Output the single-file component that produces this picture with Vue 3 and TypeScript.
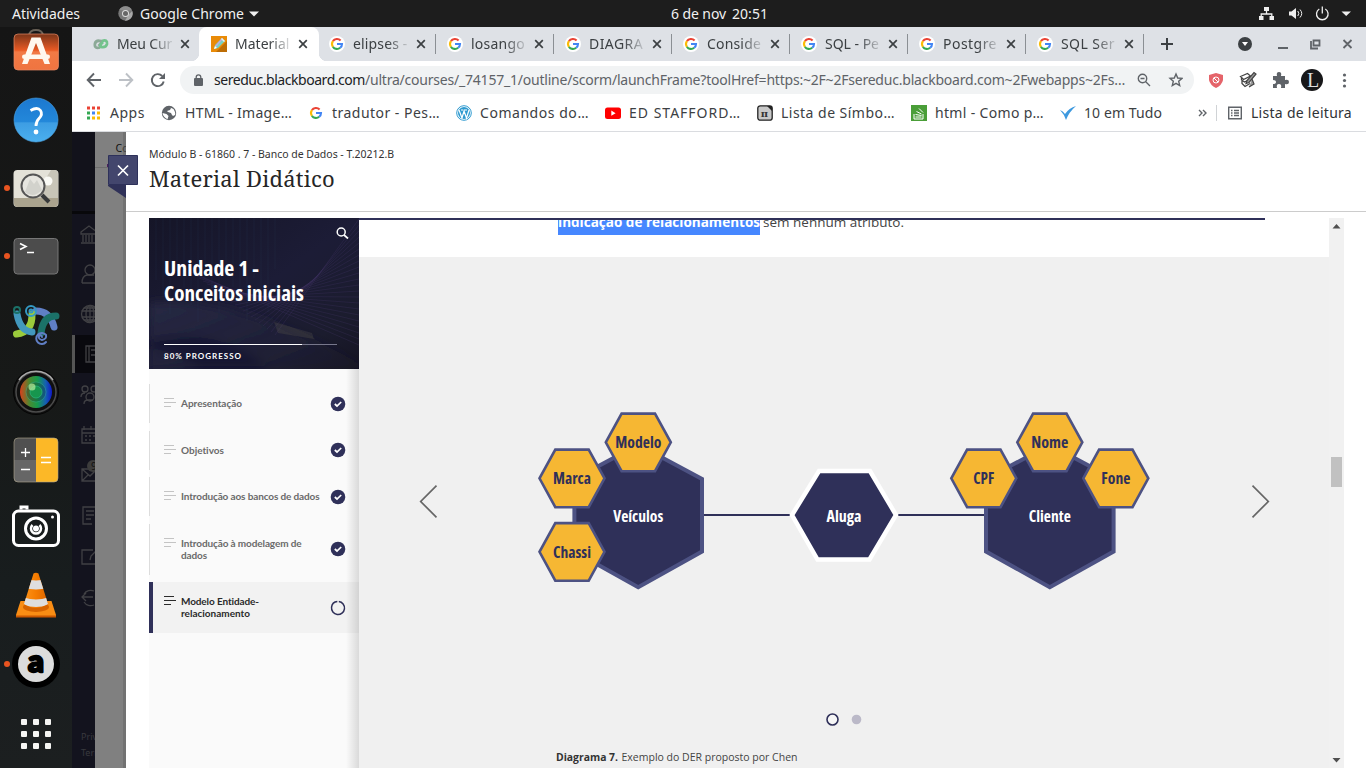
<script setup lang="ts">
interface Tab { title: string; w: number; kind: 'chain' | 'pencil' | 'google'; active?: boolean; sep?: boolean }
interface Mark { label: string; w: number; slot: number; kind: string }
interface Lesson { lines: string[]; widths: number[]; tall?: boolean; active?: boolean }

const tabs: Tab[] = [
  { title: 'Meu Cur', w: 55, kind: 'chain' },
  { title: 'Material', w: 54.5, kind: 'pencil', active: true },
  { title: 'elipses -', w: 54.5, kind: 'google', sep: true },
  { title: 'losango', w: 54, kind: 'google', sep: true },
  { title: 'DIAGRA', w: 54, kind: 'google', sep: true },
  { title: 'Conside', w: 54, kind: 'google', sep: true },
  { title: 'SQL - Pe', w: 54, kind: 'google', sep: true },
  { title: 'Postgre', w: 54, kind: 'google', sep: true },
  { title: 'SQL Ser', w: 54, kind: 'google', sep: true },
]

const marks: Mark[] = [
  { label: 'Apps', w: 35, slot: 75, kind: 'apps' },
  { label: 'HTML - Image…', w: 107, slot: 147, kind: 'globe' },
  { label: 'tradutor - Pes…', w: 108, slot: 148, kind: 'google' },
  { label: 'Comandos do…', w: 109, slot: 149, kind: 'wp' },
  { label: 'ED STAFFORD…', w: 112, slot: 152, kind: 'yt' },
  { label: 'Lista de Símbo…', w: 114, slot: 154, kind: 'pi' },
  { label: 'html - Como p…', w: 109, slot: 149, kind: 'so' },
  { label: '10 em Tudo', w: 78, slot: 140, kind: 'check' },
]

const lessons: Lesson[] = [
  { lines: ['Apresentação'], widths: [61] },
  { lines: ['Objetivos'], widths: [43] },
  { lines: ['Introdução aos bancos de dados'], widths: [138.5] },
  { lines: ['Introdução à modelagem de', 'dados'], widths: [120.5, 26], tall: true },
  { lines: ['Modelo Entidade-', 'relacionamento'], widths: [78, 69], tall: true, active: true },
]

const attributes = [
  { name: 'Marca', x: 572, y: 478.3, w: 38 },
  { name: 'Modelo', x: 638.3, y: 442.3, w: 46 },
  { name: 'Chassi', x: 572, y: 551.8, w: 38 },
  { name: 'CPF', x: 983.8, y: 478.3, w: 21 },
  { name: 'Nome', x: 1049.8, y: 442.3, w: 37 },
  { name: 'Fone', x: 1115.8, y: 478.3, w: 29 },
]
const entities = [
  { name: 'Veículos', x: 638.2, w: 50 },
  { name: 'Cliente', x: 1049.8, w: 42 },
]

// Spreads the label's letters so that it takes the given width.
const vFit = {
  mounted(el: HTMLElement, binding: { value: number }) {
    const count = (el.textContent ?? '').length
    const natural = el.getBoundingClientRect().width
    if (count > 0) el.style.letterSpacing = `${(binding.value - natural) / count}px`
  },
}
</script>

<template>
  <div class="desktop">
    <svg class="defs" width="0" height="0">
      <defs>
        <symbol id="google" viewBox="0 0 16 16">
          <circle cx="8" cy="8" r="8" fill="#fff" />
          <path d="M3.9 5.2A5 5 0 0 1 11.6 4.4" fill="none" stroke="#ea4335" stroke-width="2.1" />
          <path d="M3.9 5.2A5 5 0 0 0 3.9 10.8" fill="none" stroke="#fbbc05" stroke-width="2.1" />
          <path d="M3.9 10.8A5 5 0 0 0 11.2 11.8" fill="none" stroke="#34a853" stroke-width="2.1" />
          <path d="M8 8h5A5 5 0 0 1 11.2 11.8" fill="none" stroke="#4285f4" stroke-width="2.1" />
        </symbol>
        <linearGradient id="bag" x2="0" y2="1"><stop offset="0" stop-color="#7a3519" /><stop offset=".45" stop-color="#e95a24" /><stop offset=".5" stop-color="#f27a45" /><stop offset="1" stop-color="#ef7440" /></linearGradient>
        <linearGradient id="help" x2="0" y2="1"><stop offset="0" stop-color="#1c78d0" /><stop offset=".55" stop-color="#2388da" /><stop offset=".56" stop-color="#3d9de3" /><stop offset="1" stop-color="#4bb0ef" /></linearGradient>
        <linearGradient id="lens" x2="1" y2="0"><stop offset="0" stop-color="#d8401c" /><stop offset=".3" stop-color="#4a8a31" /><stop offset=".55" stop-color="#159a4c" /><stop offset=".8" stop-color="#1560b0" /><stop offset="1" stop-color="#1018c8" /></linearGradient>
        <linearGradient id="cone" x2="1" y2="0"><stop offset="0" stop-color="#ff9a20" /><stop offset=".5" stop-color="#f57c00" /><stop offset="1" stop-color="#d55e00" /></linearGradient>
        <clipPath id="coneClip"><path d="M33.500 12.500Q36 11 38.500 12.500L48 43Q36 51 24 43Z" /></clipPath>
      </defs>
    </svg>

    <header class="topbar">
      <span v-fit="72" class="act">Atividades</span>
      <svg class="chromeicon" width="15" height="15" viewBox="0 0 15 15"><circle cx="7.5" cy="7.5" r="7.2" fill="#777" /><path d="M1.2 4A7.2 7.2 0 0 1 14 4.4H7.5z" fill="#8d8d8d" /><path d="M7 14.7L10.6 8.8 14.2 5A7.2 7.2 0 0 1 7 14.7" fill="#a8a8a8" /><circle cx="7.5" cy="7.5" r="3.5" fill="#ddd" /><circle cx="7.5" cy="7.5" r="2.5" fill="#666" /></svg>
      <span v-fit="104" class="appname">Google Chrome</span>
      <svg class="appcaret" width="10" height="6"><path d="M0 .5h10L5 5.5z" fill="#f0f0f0" /></svg>
      <span class="clock"><span v-fit="55">6 de nov</span><span v-fit="36">20:51</span></span>
      <svg class="tray" width="94" height="17" viewBox="0 0 94 17" fill="none" stroke="#eee" stroke-width="1.3">
        <g fill="#eee" stroke="none"><path d="M5 2h5v4H5zM0 11h4.500v4H0zM10.500 11H15v4h-4.500z" /></g><path d="M7.500 6v3M2.200 11V9h10.600v2" />
        <path d="M30 6.500h2.500L37 3v11l-4.500-3.500H30z" fill="#eee" stroke="none" /><path d="M38.800 6q2 2.500 0 5M41 4.500q3.500 4 0 8" stroke-width="1" />
        <path d="M60.300 4a5.800 5.800 0 1 0 6 0M63.300 1.500v7" /><path d="M82.500 6.500h9.500L87.200 11z" fill="#eee" stroke="none" />
      </svg>
    </header>

    <div class="below">
      <aside class="dock">
        <svg viewBox="0 0 72 68"><path d="M29 21v-3q1-5 7-5t7 5v3" fill="none" stroke="#6a6157" stroke-width="2" /><rect x="14" y="17" width="44.500" height="36" rx="4" fill="url(#bag)" stroke="#e98a64" stroke-width=".7" /><path d="M31.500 20.500h9L50 47h-5.500L36 26l-8.500 21H22z" fill="#fff8ee" /><rect x="22" y="37.500" width="28" height="4.500" rx="2.200" fill="#fff8ee" /></svg>
        <svg viewBox="0 0 72 68"><circle cx="36" cy="35" r="22" fill="url(#help)" stroke="#4ba5e5" stroke-width=".6" /><path d="M30.500 25.500q7-4 10 0 2.500 4-1.500 8-3 3-3 7.500" fill="none" stroke="#fff" stroke-width="2.800" /><circle cx="36" cy="47" r="2.400" fill="#fff" /></svg>
        <svg viewBox="0 0 72 68"><circle cx="7" cy="35" r="3" fill="#e95420" /><rect x="13.500" y="17" width="45" height="37" rx="4" fill="#e4e2d8" /><path d="M14 45h44v5q0 4-4 4H18q-4 0-4-4z" fill="#aaa38e" /><path d="M34 45l17-28h3q4 0 4 4v24z" fill="#c8c5b8" /><circle cx="48" cy="28" r="4.500" fill="#fafaf5" /><circle cx="33" cy="33" r="11.500" fill="#e6e5df" stroke="#555" stroke-width="2" /><path d="M25 39l5-13 4 5 3-4 5 10q-9 9-17 2" fill="#d2d2cc" /><path d="M42 42l7 7" stroke="#37393a" stroke-width="4" /></svg>
        <svg viewBox="0 0 72 68"><circle cx="7" cy="35" r="3" fill="#e95420" /><rect x="14" y="17.500" width="44" height="35.500" rx="3.500" fill="#4c4c4c" stroke="#777" /><path d="M20 22.500l6 3-6 3M27 31.500h7" fill="none" stroke="#fff" stroke-width="1.600" /></svg>
        <svg viewBox="0 0 72 68" fill="none" stroke-width="7" stroke-linecap="round"><path d="M36 22q14 0 18 16" stroke="#607fc5" /><path d="M16.500 45q16-2 15.500-20" stroke="#9bcb3c" /><path d="M17 25q3 17 15 18" stroke="#4298bd" /><path d="M41 44q2-17 15-17" stroke="#1b7168" /><g stroke-width="2"><circle cx="17" cy="21" r="3" stroke="#1b7168" /><circle cx="31" cy="22" r="5" stroke="#3499c3" /><circle cx="31" cy="22" r="1.500" stroke="#3499c3" /><path d="M47 53a5.500 5.500 0 1 1 0-7q1 4-4 5-4-1-3-4 2-2 3 1" transform="translate(-1 0)" stroke="#607fc5" /></g></svg>
        <svg viewBox="0 0 72 68"><circle cx="36" cy="35" r="22.500" fill="#101010" stroke="#050505" /><circle cx="36" cy="35" r="20" fill="none" stroke="#4b4b4b" stroke-width="1.500" /><path d="M19 23a21 21 0 0 1 34 0" fill="none" stroke="#aaa" stroke-width="1.500" /><circle cx="36" cy="35" r="16" fill="url(#lens)" /><circle cx="36" cy="35" r="10" fill="#123" fill-opacity=".28" stroke="#3ab6a1" stroke-opacity=".4" /><circle cx="36" cy="35" r="6" fill="#17964e" stroke="#2dc08a" stroke-opacity=".6" /><circle cx="32" cy="30" r="3.500" fill="#b9ef9c" fill-opacity=".7" /></svg>
        <svg viewBox="0 0 72 68"><rect x="14" y="13" width="44" height="44" rx="4" fill="#505050" /><path d="M14 35h22v22H18q-4 0-4-4z" fill="#666" /><path d="M36 13h18q4 0 4 4v36q0 4-4 4H36z" fill="#fcb827" /><rect x="14" y="13" width="44" height="44" rx="4" fill="none" stroke="#b0a890" stroke-opacity=".6" /><path d="M21 27.500h9M25.500 23v9M21 44.500h9M41 32.500h10M41 37.500h10" stroke="#fff" stroke-width="1.300" /></svg>
        <svg viewBox="0 0 72 68" fill="none" stroke="#fff" stroke-width="3"><rect x="13.500" y="18" width="45" height="34.500" rx="5" /><path d="M21 16.500v-2.500h6v2.500" /><circle cx="36" cy="35.500" r="10.500" stroke-width="3" /><path d="M32.500 32a5 5 0 1 0 7 0" stroke-width="2.500" /><circle cx="36" cy="35.500" r="3" fill="#fff" stroke="none" /><circle cx="52.500" cy="24" r="1.500" fill="#fff" stroke="none" /></svg>
        <svg viewBox="0 0 72 68"><path d="M20.500 40h31l4.500 14v2H16v-2z" fill="#f98d14" /><path d="M16 54.500h40v2H16z" fill="#ca5700" /><ellipse cx="36" cy="46" rx="13" ry="5" fill="#d76400" /><g clip-path="url(#coneClip)"><path d="M20 9h32v45H20z" fill="url(#cone)" /><path d="M20 17q16 5 32 0v9q-16 5-32 0zM20 35q16 7 32 0v7q-16 8-32 0z" fill="#dedede" /></g></svg>
        <svg viewBox="0 0 72 68"><circle cx="7" cy="35" r="3" fill="#e95420" /><circle cx="36" cy="35" r="24" fill="#000" /><circle cx="36" cy="35" r="18" fill="#dcdcdc" /><text x="36" y="43" text-anchor="middle" class="glyph-a">a</text></svg>
        <svg viewBox="0 0 72 68"><g fill="#f4f4f2"><template v-for="r in 3" :key="r"><rect v-for="c in 3" :key="c" :x="9 + c * 12" :y="10 + r * 12" width="6" height="6" rx="1" /></template></g></svg>
      </aside>

      <main class="browser">
        <div class="tabstrip">
          <div v-for="t in tabs" :key="t.title" class="tab" :class="{ active: t.active, sep: t.sep }">
            <svg v-if="t.kind === 'google'" class="fav" width="16" height="16"><use href="#google" /></svg>
            <svg v-else-if="t.kind === 'chain'" class="fav" width="16" height="16" viewBox="0 0 16 16" fill="none" stroke-width="2.800"><path d="M7 11.500Q1 13 2 7.500 3 4 7.500 5q2 0 0 3L5.500 10" stroke="#8ca997" /><path d="M9 5Q14.500 3 14 8q-1 4-6 3-1-1 0-3l2-2" stroke="#73c38c" /></svg>
            <svg v-else class="fav" width="16" height="16" viewBox="0 0 16 16"><path d="M0 0h16v16H0z" fill="#e98b08" /><path d="M5 16L16 5v11z" fill="#bd6d05" /><path d="M3 13l1-4 7-7 3 3-7 7z" fill="#77d2c2" /><path d="M4 10l7-8 1 1-7 8z" fill="#c5a9df" /><path d="M11 2l3 3-1 1-3-3z" fill="#eee" /><path d="M3 13l1-3 2 2z" fill="#fff" /></svg>
            <span class="tabtitle"><span v-fit="t.w">{{ t.title }}</span></span>
            <svg class="x" width="10" height="10"><path d="M1.200 1.200l7.600 7.600M8.800 1.200L1.200 8.800" stroke="#3c4043" stroke-width="1.700" /></svg>
          </div>
          <svg class="plus" width="12" height="12"><path d="M6 0v12M0 6h12" stroke="#3c4043" stroke-width="2" /></svg>
          <svg class="winctl" width="116" height="16" viewBox="0 0 116 16"><circle cx="7" cy="8" r="7" fill="#3c4043" /><path d="M4 6h6l-3 4z" fill="#fff" /><g fill="none" stroke="#5f6368" stroke-width="1.800"><path d="M40 12h10M75.500 4.500h6v5h-6zM73 5v7.500h7M105.500 4l8 8M113.500 4l-8 8" /></g></svg>
        </div>

        <div class="toolbar">
          <svg class="navs" width="80" height="16" viewBox="0 0 80 16" fill="none" stroke-width="1.900"><path d="M15 8H2M8 1.500L1.700 8 8 14.500" stroke="#5f6368" /><path d="M33 8h13M40 1.500L46.300 8 40 14.500" stroke="#bdc1c6" /><path d="M77.700 9.500a6 6 0 1 1-1.500-5.500" stroke="#5f6368" /><path d="M79 1v6h-6z" fill="#5f6368" /></svg>
          <div class="omni">
            <svg class="lock" width="9" height="12" viewBox="0 0 9 12"><rect y="4" width="9" height="8" rx="1" fill="#5f6368" /><path d="M2.200 5V3.200a2.300 2.300 0 0 1 4.600 0V5" fill="none" stroke="#5f6368" stroke-width="1.300" /></svg>
            <span v-fit="151" class="host">sereduc.blackboard.com</span><span v-fit="760" class="path">/ultra/courses/_74157_1/outline/scorm/launchFrame?toolHref=https:~2F~2Fsereduc.blackboard.com~2Fwebapps~2Fs…</span>
            <svg class="omniicons" width="46" height="16" viewBox="0 0 46 16" fill="none" stroke="#5f6368" stroke-width="1.400"><circle cx="5.500" cy="6.500" r="4.200" /><path d="M3.500 6.500h4M8.500 9.500l4.500 4.500" /><path d="M39 2l1.700 4 4.300.4-3.300 2.900 1 4.200L39 11.300l-3.700 2.200 1-4.200L33 6.400l4.300-.4z" /></svg>
          </div>
          <svg class="exts" width="146" height="24" viewBox="0 0 146 24">
            <path d="M8 5l7 2v5q-1 5-7 8-6-3-7-8V7z" fill="#e5646a" /><circle cx="8" cy="12" r="3" fill="none" stroke="#fff" /><path d="M6 10l4 4" stroke="#fff" />
            <path d="M32.500 8.500l7-3 3 2.500-7 3.500zM33.500 9v3l3 2 6-3M34 13v2.500l3 3 5-3" fill="none" stroke="#444" stroke-width="1.300" /><path d="M38 15.500l1-3 7-8 2 1.500-7 8.500zM44 11l2 5-5 3" fill="#999" stroke="#444" stroke-width="1.200" />
            <path d="M65 8h4q-1-4 2-4t2 4h4v4q4-1 4 2t-4 2v4h-4q1-4-2-4t-2 4h-4v-4q3 0 3-2t-3-2z" fill="#5f6368" />
            <circle cx="104" cy="12" r="11" fill="#171719" /><text x="105" y="18.500" class="avatar" text-anchor="middle">L</text>
            <g fill="#5f6368"><circle cx="136.500" cy="7" r="1.600" /><circle cx="136.500" cy="12.500" r="1.600" /><circle cx="136.500" cy="18" r="1.600" /></g>
          </svg>
        </div>

        <div class="bookmarks">
          <div v-for="m in marks" :key="m.label" class="mark" :style="{ width: m.slot + 'px' }">
            <svg class="markicon" width="16" height="16" viewBox="0 0 16 16">
              <g v-if="m.kind === 'apps'"><path d="M1 1.500h3v3H1zM6 1.500h3v3H6zM11 1.500h3v3h-3z" fill="#ea4335" /><path d="M1 6.500h3v3H1zM1 11.500h3v3H1z" fill="#34a853" /><path d="M6 6.500h3v3H6z" fill="#4285f4" /><path d="M11 6.500h3v3h-3zM6 11.500h3v3H6zM11 11.500h3v3h-3z" fill="#fbbc05" /></g>
              <g v-else-if="m.kind === 'globe'"><circle cx="8" cy="8" r="7.200" fill="#5f6368" /><path d="M1.500 8l4 1 2 2-1 3.200Q2 12 1.500 8M8 2l2 1-1 2-3 1 1 1 3 1 1 2 1 1 2-1Q15 8 12.500 4z" fill="#fff" /></g>
              <use v-else-if="m.kind === 'google'" href="#google" />
              <g v-else-if="m.kind === 'wp'" fill="none" stroke="#2e9ad0"><circle cx="8" cy="8" r="7.300" /><circle cx="8" cy="8" r="6" fill="#2e9ad0" stroke="none" /><path d="M3 5l3 8 2-7 2.500 7L13 5M5 5h2M8 5h3" stroke="#fff" stroke-width="1.200" /></g>
              <g v-else-if="m.kind === 'yt'"><rect y="2.500" width="16" height="11.500" rx="2.500" fill="#f00" /><path d="M6.300 5.600v5.200L10.600 8.200z" fill="#fff" /></g>
              <g v-else-if="m.kind === 'pi'"><rect x=".8" y=".8" width="14.400" height="14.400" rx="2.500" fill="#c8c8c8" stroke="#222" stroke-width="1.300" /><path d="M10 1h5v5z" fill="#222" /><text x="7.500" y="12" text-anchor="middle" class="pi">π</text></g>
              <g v-else-if="m.kind === 'so'"><path d="M0 0h16v16H0z" fill="#4a9e38" /><path d="M3 9v5h9V9M4.500 12h6M4.500 9.500l6 1M5.500 6.500l5 2.500M8 3.500l4 4" stroke="#fff" fill="none" /></g>
              <path v-else d="M0 5q3 1 5 4Q9 3 16 1 9 7 6 15 4 9 0 5" fill="#3d99df" />
            </svg>
            <span v-fit="m.w">{{ m.label }}</span>
          </div>
          <svg class="more" width="9" height="8"><path d="M1 1l3 3-3 3M5 1l3 3-3 3" fill="none" stroke="#5f6368" stroke-width="1.400" /></svg>
          <i class="msep"></i>
          <svg class="list" width="14" height="14" viewBox="0 0 14 14" fill="none" stroke="#5f6368" stroke-width="1.400"><path d="M.7 1.200h12.600v11.600H.7zM3 4.500h1.500M6 4.500h5M3 7h1.500M6 7h5M3 9.500h1.500M6 9.500h5" /></svg>
          <span v-fit="101" class="reading">Lista de leitura</span>
        </div>

        <section class="page">
          <svg class="under" width="54" height="636" viewBox="72 132 54 636">
            <path d="M72 132h23v79H72z" fill="#12121b" /><path d="M72 211h23v3H72z" fill="#08080b" /><path d="M72 214h23v554H72z" fill="#13131e" /><path d="M95 132h31v636H95z" fill="#808080" />
            <path d="M95 167.500h31" stroke="#6d6d6d" /><path d="M107 164h2v3h-2z" fill="#4b1f5c" /><text x="115.500" y="152" class="co">Co</text>
            <path d="M72 335h23v38H72z" fill="#09090e" /><path d="M72 335h3v38h-3z" fill="#555" />
            <svg x="72" y="132" width="23" height="636" viewBox="72 132 23 636"><g fill="none" stroke="#404044" stroke-width="1.300">
              <path d="M81 232l8-6 8 6v2H81zM83 235v7M86 235v7M89 235v7M92 235v7M81 243h15" /><circle cx="90" cy="270" r="5" /><path d="M82 283q0-7 5-8h7M82 283h13" />
              <circle cx="90" cy="314" r="8.500" /><ellipse cx="90" cy="314" rx="4" ry="8.500" /><path d="M90 305v18M81.500 311h14M82 317h14M84 308h12M84 320h12" />
              <path d="M86 346h12v16H86zM89 346v16M91 350h5M91 355h5" /><circle cx="85" cy="389" r="3" /><circle cx="94" cy="389" r="3" /><circle cx="90" cy="397" r="4" /><path d="M81 397q0-4 4-4M84 404q0-4 4-4h5" />
              <path d="M82 429h15v14H82zM82 433h14M84 426v4M91 426v4M85 436h2M89 436h2M93 436h2M85 440h2M89 440h2" /><path d="M82 469h15v12H82zM82 469l8 7 7-7M82 481l6-6" />
              <path d="M95 507H83v17h9M86 511h8M86 515h8M86 519h5" /><path d="M93 550H82v14h13M90 560l1-4 5-5" /><path d="M94 591a8 8 0 0 0-10 3M94 605a8 8 0 0 1-10-3M82 597h11M86 593l-4 4 4 4" />
            </g><circle cx="93" cy="466" r="6" fill="#3c3c3c" /><text x="91" y="470" class="badge">9</text><text x="81" y="740" class="foot">Privac</text><text x="81" y="756" class="foot">Termos</text></svg>
            <path d="M123 132h3v636h-3z" fill="#666" fill-opacity=".55" />
          </svg>
          <button class="close" aria-label="Fechar"><svg width="30" height="44" viewBox="0 0 30 44"><path d="M0 30h18v13L0 31z" fill="#2f3158" /><path d="M.5.5h29v29H.5z" fill="#43466d" stroke="#2e315a" /><path d="M10 10.500l10 10M20 10.500l-10 10" stroke="#fff" stroke-width="1.700" /></svg></button>

          <div class="panel">
            <div class="heading"><p><span v-fit="245">Módulo B - 61860 . 7 - Banco de Dados - T.20212.B</span></p><h1><span v-fit="186">Material Didático</span></h1></div>
            <div class="frame">
              <nav class="side">
                <div class="hero">
                  <svg class="herobg" width="210" height="151" viewBox="0 0 210 151">
                    <defs><linearGradient id="hg" x2="1" y2="1"><stop offset="0" stop-color="#151527" /><stop offset=".5" stop-color="#1c1c36" /><stop offset=".8" stop-color="#1b1c2e" /><stop offset="1" stop-color="#151322" /></linearGradient><linearGradient id="band" x2="1" y2=".8"><stop offset="0" stop-color="#272944" /><stop offset="1" stop-color="#202038" stop-opacity=".2" /></linearGradient><filter id="soft"><feGaussianBlur stdDeviation="5" /></filter></defs>
                    <path d="M0 0h210v151H0z" fill="url(#hg)" /><g filter="url(#soft)"><path d="M0 85q80-10 210 60v6H0z" fill="url(#band)" /><path d="M0 122q70-15 120 29H50Q35 135 0 130z" fill="#181730" /></g>
                    <g fill="none" stroke="#55417e" stroke-opacity=".2"><path v-for="i in 22" :key="i" :d="`M${130 - i * 4} ${120 - i * 3}L210 ${i * 6 - 5}`" /></g><g stroke="#395477" stroke-opacity=".13"><path v-for="i in 18" :key="i" :d="`M${i * 7} 0v${45 + (i * 17) % 60}`" /></g>
                    <path d="M125 104l38 11 2 6-36-6z" fill="#817860" fill-opacity=".18" />
                  </svg>
                  <svg class="search" width="13" height="12"><circle cx="5.200" cy="5" r="4" fill="none" stroke="#fff" stroke-width="1.500" /><path d="M8 8l4 3.500" stroke="#fff" stroke-width="1.700" /></svg>
                  <svg class="herotitle" width="180" height="60"><text x="0" y="20" textLength="95" lengthAdjust="spacingAndGlyphs">Unidade 1 -</text><text x="0" y="45" textLength="140" lengthAdjust="spacingAndGlyphs">Conceitos iniciais</text></svg>
                  <div class="progress"><i></i></div><div class="ptext"><span v-fit="78">80% PROGRESSO</span></div>
                </div>
                <div class="lessons">
                  <div v-for="l in lessons" :key="l.lines[0]" class="lesson" :class="{ tall: l.tall, current: l.active }">
                    <svg class="lines" width="12" height="10"><path d="M0 .5h10M0 4.500h12M0 8.500h7" stroke="currentColor" stroke-width="1.200" /></svg>
                    <div class="lname"><div v-for="(s, i) in l.lines" :key="s"><span v-fit="l.widths[i]">{{ s }}</span></div></div>
                    <svg class="state" width="16" height="16"><template v-if="!l.active"><circle cx="8" cy="8" r="7.300" fill="#2f3059" /><path d="M4.800 8l2.200 2L11.200 6" fill="none" stroke="#fff" stroke-width="1.700" /></template><circle v-else cx="8" cy="8" r="6.500" fill="none" stroke="#2f3059" stroke-width="1.500" stroke-dasharray="38.300 2.540" transform="rotate(-83 8 8)" /></svg>
                  </div>
                </div>
              </nav>

              <article class="doc">
                <div class="topline"></div>
                <div class="para"><strong><span v-fit="202">indicação de relacionamentos</span></strong><span v-fit="141" class="rest">sem nenhum atributo.</span></div>
                <svg class="diagram" width="970" height="511" viewBox="359 257 970 511">
                  <path d="M700 515h94M895 515h94" stroke="#2f3059" stroke-width="2" />
                  <g v-for="e in entities" :key="e.name" :transform="`translate(${e.x} 516)`"><path d="M0-71.200L63.800-37V35.500L0 71.200-63.800 35.500V-37z" fill="#2f3059" stroke="#4d5283" stroke-width="4" /><text y="6" text-anchor="middle" class="dt light" :textLength="e.w" lengthAdjust="spacingAndGlyphs">{{ e.name }}</text></g>
                  <path d="M819 471h51l26 44-26.500 44.500h-52L792 515z" fill="#2f3059" stroke="#fff" stroke-width="4.500" /><text x="844" y="522" text-anchor="middle" class="dt light" textLength="35" lengthAdjust="spacingAndGlyphs">Aluga</text>
                  <g v-for="a in attributes" :key="a.name" :transform="`translate(${a.x} ${a.y})`"><path d="M-16.700-28.700h33.400L32.500 0 16.700 28.900h-33.400L-32.500 0z" fill="#f6b733" stroke="#4d5283" stroke-width="2.600" /><text y="6" text-anchor="middle" class="dt" :textLength="a.w" lengthAdjust="spacingAndGlyphs">{{ a.name }}</text></g>
                  <path d="M436.500 485.700L420.700 501.500l15.800 15.800M1252.500 485.700l15.800 15.800-15.800 15.800" fill="none" stroke="#666" stroke-width="1.700" />
                  <circle cx="832.500" cy="719.500" r="5.500" fill="#fff" fill-opacity=".4" stroke="#2f3059" stroke-width="1.600" /><circle cx="856.500" cy="719.500" r="4.800" fill="#bbb9c8" />
                  <text x="556" y="761" class="cap bold" textLength="62" lengthAdjust="spacingAndGlyphs">Diagrama 7.</text><text x="621.500" y="761" class="cap" textLength="176" lengthAdjust="spacingAndGlyphs">Exemplo do DER proposto por Chen</text>
                </svg>
              </article>
              <div class="scroll"><svg width="15" height="550"><path d="M3.500 10.500h8L7.500 6zM3.500 540h8l-4 4.500z" fill="#505050" /><path d="M2 239h11v30H2z" fill="#c1c1c1" /></svg></div>
            </div>
          </div>
        </section>
      </main>
    </div>
  </div>
</template>

<style scoped>
.desktop { width: 1366px; height: 768px; overflow: hidden; display: flex; flex-direction: column; background: #171a1b; font-family: "Noto Sans", "Open Sans", sans-serif; font-size: 14px; color: #3c4043; white-space: nowrap; position: relative; }
.desktop span { display: inline-block; }
svg { display: block; flex: none; }
.defs { position: absolute; }
.topbar { height: 27px; flex: none; background: #1d1d1d; color: #f1f1f1; display: flex; align-items: center; padding-left: 12px; box-sizing: border-box; font-size: 14px; }
.act { width: 72px; }
.chromeicon { margin-left: 34px; }
.appname { margin-left: 7px; }
.appcaret { margin-left: 5px; }
.clock { margin-left: 412px; display: inline-flex !important; gap: 6px; width: 98px; padding-bottom: 1px; }
.tray { margin-left: 490px; }
.below { display: flex; height: 741px; }
.dock { width: 72px; overflow: hidden; flex: none; background: linear-gradient(#151515, #171918 50%, #181d1e 75%, #1c1f20); }
.dock svg { width: 72px; height: 68px; }
.dock svg:first-child { margin-top: -10px; }
.glyph-a { font: 900 31px Lato, sans-serif; fill: #000; stroke: #000; stroke-width: 2.4px; stroke-linejoin: round; }
.browser { width: 1294px; background: #fff; }
.tabstrip { height: 34px; background: #dee1e6; display: flex; align-items: center; padding-left: 9px; box-sizing: border-box; }
.tab { width: 118px; height: 34px; display: flex; align-items: center; padding-left: 12px; box-sizing: border-box; position: relative; flex: none; }
.tab.sep::after { content: ""; position: absolute; right: -1px; top: 7px; height: 20px; width: 1px; background: #8b8f94; }
.tab.active { background: #fff; border-radius: 8px 8px 0 0; width: 120px; margin-right: -2px; }
.tab.active::before { content: ""; position: absolute; left: -8px; bottom: 0; width: 136px; height: 8px; background: radial-gradient(circle at 0 0, #dee1e6 8px, #fff 8.500px) left / 8px 8px no-repeat, radial-gradient(circle at 100% 0, #dee1e6 8px, #fff 8.500px) right / 8px 8px no-repeat; }
.tabtitle { margin-left: 8px; margin-top: -2px; width: 55px; overflow: hidden; -webkit-mask-image: linear-gradient(90deg, #000 62%, rgba(0,0,0,.15)); mask-image: linear-gradient(90deg, #000 62%, rgba(0,0,0,.15)); }
.x { margin-left: 8px; margin-top: -1px; }
.plus { margin-left: 18px; }
.winctl { margin-left: 65px; }
.toolbar { height: 37px; display: flex; align-items: center; padding-left: 14px; box-sizing: border-box; }
.omni { margin-left: 14px; width: 1014px; height: 28px; border-radius: 14px; background: #f1f3f4; display: flex; align-items: center; padding-left: 14px; box-sizing: border-box; }
.lock { margin-right: 11px; }
.host { color: #202124; }
.path { color: #5f6368; }
.omniicons { margin-left: 12px; }
.exts { margin-left: 14px; }
.avatar { font: 20px "Liberation Serif", serif; fill: #ddd; }
.bookmarks { height: 34px; border-bottom: 1px solid #dadce0; display: flex; align-items: center; padding: 0 0 4px 14px; box-sizing: border-box; }
.mark { display: flex; align-items: center; gap: 8px; flex: none; }
.mark span { margin-left: 0; }
.pi { font: bold 10px "DejaVu Serif", serif; fill: #333; }
.more { margin-left: -2px; }
.msep { width: 1px; height: 16px; background: #d0d3d6; margin-left: 9px; }
.list { margin-left: 11px; }
.reading { margin-left: 9px; color: #303336; }
.page { height: 636px; display: flex; position: relative; }
.co { font: 10.5px "Noto Sans", sans-serif; fill: #111; }
.badge { font: 10px "Noto Sans", sans-serif; fill: #111; }
.foot { font: 9px "Noto Sans", sans-serif; fill: #39393e; }
.close { position: absolute; left: 36px; top: 23px; padding: 0; border: 0; background: none; }
.panel { width: 1240px; background: #fff; }
.heading { height: 80px; border-bottom: 1px solid #ccc; box-sizing: border-box; padding: 15px 0 0 23px; }
.heading p { margin: 0; height: 15px; line-height: 15px; font-size: 10.5px; color: #333; }
.heading h1 { margin: 1px 0 0; font: 22px/31px "Noto Serif", "DejaVu Serif", serif; color: #262626; }
.frame { margin: 6px 0 0 23px; height: 550px; display: flex; }
.side { width: 210px; background: #fafafa; position: relative; }
.side::after { content: ""; position: absolute; right: 0; top: 151px; bottom: 0; width: 13px; background: linear-gradient(90deg, rgba(0,0,0,0), rgba(0,0,0,.13)); }
.hero { height: 151px; position: relative; color: #fff; padding: 9px 0 0 15px; box-sizing: border-box; }
.herobg { position: absolute; inset: 0; }
.search { position: relative; margin-left: 172px; }
.herotitle { position: relative; margin-top: 17px; height: 60px; font: 700 21px "Open Sans", sans-serif; font-stretch: 75%; fill: #fff; }
.progress { position: relative; margin-top: 28px; width: 173px; height: 1px; background: #77778b; }
.progress i { display: block; height: 1px; width: 138px; background: #fff; }
.ptext { position: relative; font: 700 8px/12px Lato, sans-serif; margin-top: 5px; }
.lessons { padding-top: 15px; display: flex; flex-direction: column; gap: 7.600px; }
.lesson { height: 39px; box-sizing: border-box; border-left: 1px solid #ddd; display: flex; align-items: center; padding-left: 14px; font: 700 10px/12px Lato, sans-serif; color: #6a6a6a; }
.lesson.tall { height: 51px; }
.lesson.current { border-left: 4px solid #2f3059; padding-left: 11px; background: #f2f2f2; color: #2b2b2b; }
.lines { color: #c4c4c4; align-self: flex-start; margin-top: 14px; }
.current .lines { color: #2b2b2b; }
.lname { width: 144px; margin-left: 5px; flex: none; padding-bottom: 1px; }
.state { margin-left: 5px; }
.doc { width: 970px; background: #fff; }
.topline { height: 2px; width: 906px; background: #2f3059; }
.para { height: 37px; overflow: hidden; padding-left: 199px; display: flex; font: 13.500px/18px "Open Sans", sans-serif; color: #444; }
.para strong { background: #4687ff; color: #fff; height: 15px; width: 202px; line-height: 5px; overflow: hidden; }
.para .rest { margin-left: 3px; line-height: 5px; height: 15px; }
.diagram { background: #f0f0f0; }
.dt { font: 700 15.500px "Open Sans", sans-serif; font-stretch: 75%; fill: #2f3059; }
.dt.light { fill: #fff; }
.cap { font: 10.500px "Open Sans", sans-serif; fill: #444; }
.cap.bold { font-weight: 700; fill: #333; }
.scroll { width: 15px; background: #f1f1f1; }
</style>

<style>
html, body { margin: 0; overflow: hidden; }
</style>
